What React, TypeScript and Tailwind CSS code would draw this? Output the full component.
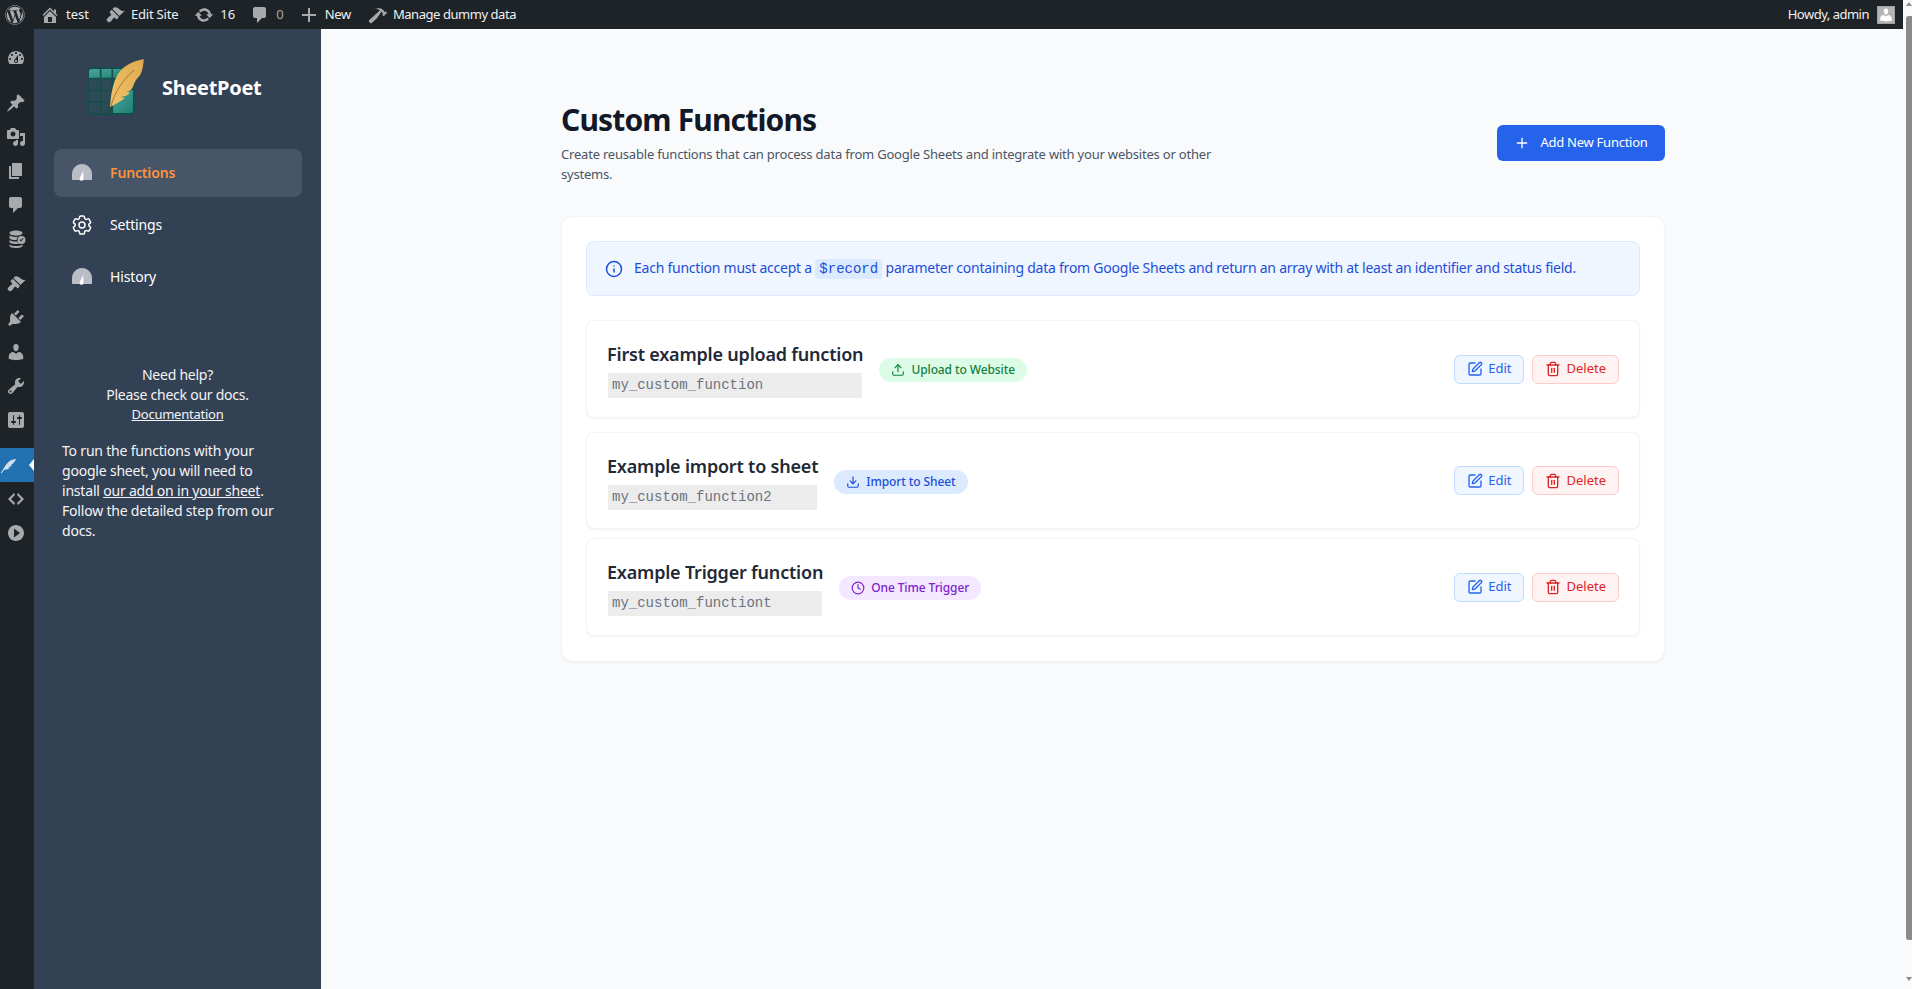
import { Clock, Download, Info, Plus, SquarePen, Trash2, Upload } from "lucide-react";
import { FaWordpress } from "react-icons/fa";
import { HiOutlineCog6Tooth } from "react-icons/hi2";

// dashicons paths, all on a 20x20 box
const dashicons = {
  home: "M16 8.5l1.53 1.53-1.06 1.06L10 4.62l-6.47 6.47-1.06-1.06L10 2.5l4 4v-2h2v4zm-6-2.46l6 5.99V18H4v-5.97zM12 17v-5H8v5h4z",
  brush: "M14.48 11.06L7.41 3.99l1.5-1.5c.5-.56 2.3-.47 3.51.32 1.21.8 1.43 1.28 2.91 2.1 1.18.64 2.45 1.26 4.45.85zm-.71.71L6.7 4.7 4.93 6.47c-.39.39-.39 1.02 0 1.41l1.06 1.06c.39.39.39 1.03 0 1.42-.6.6-1.43 1.11-2.21 1.69-.35.26-.7.53-1.01.84-1.34 1.34-1.37 2.33-.75 2.95l1.1 1.1c.62.62 1.61.59 2.95-.75.31-.31.58-.66.84-1.01.58-.78 1.09-1.61 1.69-2.21.39-.39 1.03-.39 1.42 0l1.06 1.06c.39.39 1.02.39 1.41 0z",
  update: "M10.2 3.28c3.53 0 6.43 2.61 6.92 6h2.08l-3.5 4-3.5-4h2.32c-.45-1.97-2.21-3.45-4.32-3.45-1.45 0-2.73.71-3.54 1.78L4.95 5.66C6.23 4.2 8.11 3.28 10.2 3.28zm-.4 13.44c-3.52 0-6.43-2.61-6.92-6H.8l3.5-4c1.17 1.33 2.33 2.67 3.5 4H5.48c.45 1.97 2.21 3.45 4.32 3.45 1.45 0 2.73-.71 3.54-1.78l1.71 1.95c-1.28 1.46-3.15 2.38-5.25 2.38z",
  comment: "M5 2h9c1.1 0 2 .9 2 2v7c0 1.1-.9 2-2 2h-2l-5 5v-5H5c-1.1 0-2-.9-2-2V4c0-1.1.9-2 2-2z",
  plus: "M17 9v2h-6v6H9v-6H3V9h6V3h2v6h6z",
  hammer: "M17.7 6.32l1.41 1.42-3.47 3.41-1.42-1.42.84-.82c-.32-.76-.81-1.57-1.51-2.31l-4.61 6.59-5.26 4.7c-.39.39-1.02.39-1.42 0l-1.2-1.21c-.39-.39-.39-1.02 0-1.41l10.97-9.92c-1.37-.86-3.21-1.46-5.67-1.48 2.7-.82 4.95-.93 6.58-.3 1.7.66 2.82 2.2 3.91 3.58z",
  dashboard: "M3.76 16h12.48c1.1-1.37 1.76-3.11 1.76-5 0-4.42-3.58-8-8-8s-8 3.58-8 8c0 1.89.66 3.63 1.76 5zM10 4c.55 0 1 .45 1 1s-.45 1-1 1-1-.45-1-1 .45-1 1-1zM6 6c.55 0 1 .45 1 1s-.45 1-1 1-1-.45-1-1 .45-1 1-1zm8 0c.55 0 1 .45 1 1s-.45 1-1 1-1-.45-1-1 .45-1 1-1zm-5.37 5.55L12 7v6c0 1.1-.9 2-2 2s-2-.9-2-2c0-.57.24-1.08.63-1.45zM4 10c.55 0 1 .45 1 1s-.45 1-1 1-1-.45-1-1 .45-1 1-1zm12 0c.55 0 1 .45 1 1s-.45 1-1 1-1-.45-1-1 .45-1 1-1zm-5 3c0-.55-.45-1-1-1s-1 .45-1 1 .45 1 1 1 1-.45 1-1z",
  pin: "M10.44 3.02l1.82-1.82 6.36 6.35-1.83 1.82c-1.05-.68-2.48-.57-3.41.36l-.75.75c-.92.93-1.04 2.35-.35 3.41l-1.83 1.82-2.41-2.41-2.8 2.79c-.42.42-3.38 2.71-3.8 2.29s1.86-3.39 2.28-3.81l2.79-2.79L4.1 9.36l1.83-1.82c1.05.69 2.48.57 3.4-.36l.75-.75c.93-.92 1.05-2.35.36-3.41z",
  media: "M13 11V4c0-.55-.45-1-1-1h-1.67L9 1H5L3.67 3H2c-.55 0-1 .45-1 1v7c0 .55.45 1 1 1h10c.55 0 1-.45 1-1zM7 4.5c1.38 0 2.5 1.12 2.5 2.5S8.38 9.5 7 9.5 4.5 8.38 4.5 7 5.62 4.5 7 4.5zM14 6h5v10.5c0 1.38-1.12 2.5-2.5 2.5S14 17.88 14 16.5s1.12-2.5 2.5-2.5c.17 0 .34.02.5.05V9h-3V6zm-4 8.05V13h2v3.5c0 1.38-1.12 2.5-2.5 2.5S7 17.88 7 16.5 8.12 14 9.5 14c.17 0 .34.02.5.05z",
  page: "M6 15V2h10v13H6zm-1 1h8v2H3V5h2v11z",
  database: "M10 1.5c3.6 0 6.5 1 6.5 2.6S13.6 6.7 10 6.7 3.5 5.700 3.500 4.100 6.400 1.500 10 1.500zM3.500 6.300c1.300 1 3.800 1.600 6.500 1.600.6 0 1.200 0 1.700-.1a5 5 0 0 0-1 3.300H10c-2.700 0-5.200-.6-6.500-1.600zm0 4.700c1.300 1 3.800 1.600 6.500 1.600h1.200c.5.900 1.300 1.600 2.300 2-1 .2-2.300.4-3.500.4-3.600 0-6.500-1-6.500-2.300zm0 4.500c1.300 1 3.800 1.600 6.500 1.600s5.200-.6 6.500-1.600v1.200c0 1.300-2.900 2.300-6.500 2.300s-6.500-1-6.500-2.300zM15.500 7a4 4 0 1 1 0 8 4 4 0 0 1 0-8zm-2 4 1.500 1.500 2.600-2.900-.7-.6-1.900 2.100-.8-.8z",
  plugin: "M13.11 4.36L9.87 7.6 8 5.73l3.24-3.24c.35-.34 1.05-.2 1.56.32.52.51.66 1.21.31 1.55zm-8 1.77l.91-1.12 9.01 9.01-1.19.84c-.71.71-2.63 1.16-3.82 1.16H6.14L4.9 17.26c-.59.59-1.54.59-2.12 0-.59-.58-.59-1.53 0-2.12l1.24-1.24v-3.88c0-1.13.4-3.19 1.09-3.89zm7.26 3.97l3.24-3.24c.34-.35 1.04-.21 1.55.31.52.51.66 1.21.31 1.55l-3.24 3.25z",
  users: "M10 9.25c-2.27 0-2.73-3.44-2.73-3.44C7 4.02 7.82 2 9.97 2c2.16 0 2.98 2.02 2.71 3.81 0 0-.41 3.44-2.68 3.44zm0 2.57L12.72 10c2.39 0 4.52 2.33 4.52 4.53v2.49s-3.65 1.13-7.24 1.13c-3.65 0-7.24-1.13-7.24-1.13v-2.49c0-2.25 1.94-4.48 4.47-4.48z",
  tools: "M16.68 9.77c-1.34 1.34-3.3 1.67-4.95.99l-5.41 6.52c-.99.99-2.59.99-3.58 0s-.99-2.59 0-3.57l6.52-5.42c-.68-1.65-.35-3.61.99-4.95 1.28-1.28 3.12-1.62 4.72-1.06l-2.89 2.89 2.82 2.82 2.86-2.87c.53 1.58.18 3.39-1.08 4.67zM3.81 16.21c.4.39 1.04.39 1.43 0 .4-.4.4-1.04 0-1.43-.39-.4-1.03-.4-1.43 0-.39.39-.39 1.03 0 1.43z",
  settings: "M18 16V4c0-1.1-.9-2-2-2H4c-1.100 0-2 .9-2 2v12c0 1.100.9 2 2 2h12c1.100 0 2-.9 2-2zM8 11h1c.55 0 1 .45 1 1s-.45 1-1 1H8v1.500c0 .28-.22.5-.5.5s-.5-.22-.5-.5V13H6c-.55 0-1-.45-1-1s.45-1 1-1h1V5.500c0-.28.22-.5.5-.5s.5.22.5.5V11zm5-2h-1c-.55 0-1-.45-1-1s.45-1 1-1h1V5.500c0-.28.22-.5.5-.5s.5.22.5.5V7h1c.55 0 1 .45 1 1s-.45 1-1 1h-1v5.500c0 .28-.22.5-.5.5s-.5-.22-.5-.5V9z",
  feather: "M19 2c-5 .6-9 3-11.500 6.500C5.500 11.300 4 14.500 1 18.500l.9.5c1.100-1.500 2.100-2.900 3.200-4.100 2.700.1 5.200-.7 6.900-2.300-1 0-2-.1-2.700-.5 1.500 0 3.500-.5 5-2-1 0-1.800-.2-2.400-.5 2.100-.4 4.700-2.500 7.100-7.600z",
  code: "M9 6l-4 4 4 4-1 2-6-6 6-6zm2 8l4-4-4-4 1-2 6 6-6 6z",
  play: "M10 2c4.400 0 8 3.600 8 8s-3.600 8-8 8-8-3.600-8-8 3.600-8 8-8zM8 5.500v9l6-4.500z",
};

function Dash({ name, className }: { name: keyof typeof dashicons; className?: string }) {
  return (
    <svg viewBox="0 0 20 20" fill="currentColor" className={className ?? "w-5 h-5"}>
      <path d={dashicons[name]} />
    </svg>
  );
}

function Gauge() {
  return (
    <svg viewBox="0 0 24 24" className="w-6 h-6 shrink-0">
      <path d="M2 19v-6C2 7.500 6.500 3 12 3s10 4.500 10 10v6z" fill="#b9bdc6" />
      <path d="M13.200 10 13.500 17.500a2 2 0 1 1-3.500-1z" fill="#fff" />
    </svg>
  );
}

function Logo() {
  return (
    <svg viewBox="0 0 58 60" className="w-[58px] h-[60px] shrink-0">
      <defs>
        <linearGradient id="teal" x1="0" y1="0" x2="1" y2="1">
          <stop offset="0" stopColor="#4aa89e" />
          <stop offset="1" stopColor="#1d7c72" />
        </linearGradient>
        <linearGradient id="gold" x1="1" y1="0" x2="0" y2="1">
          <stop offset="0" stopColor="#e0a94f" />
          <stop offset="1" stopColor="#efc36b" />
        </linearGradient>
      </defs>
      <rect x="1" y="10" width="46" height="46" rx="4" fill="#2f4a57" stroke="#134e4a" strokeWidth="2" />
      <path d="M1 20.500h46V14a4 4 0 0 0-4-4H5a4 4 0 0 0-4 4z" fill="url(#teal)" />
      <path d="M25.500 32.500H47V52a4 4 0 0 1-4 4H25.500z" fill="url(#teal)" />
      <path d="M1 20.500h46M1 32.500h30M1 44h30M13.700 10v46M25.300 10v46" stroke="#134e4a" strokeWidth="1.600" fill="none" />
      <rect x="1" y="10" width="46" height="46" rx="4" fill="none" stroke="#134e4a" strokeWidth="2" />
      <path d="M22 59 24 48" stroke="#134e4a" strokeWidth="1.600" />
      <path d="M57 1C46 3 36 8 31 16c-5 8-7 20-8 33 6-3 11-6 15-9-1.500-.2-3-.5-4-1.200 3 0 6-1 9-4-1.300-.2-2.500-.6-3.200-1.300 3 .2 6-3 7-7 1-3 3-6 6-9 2-3 3.500-8 4-17z" fill="url(#gold)" />
      <path d="M24 48C28 34 34 24 47 12" stroke="#a9782c" strokeWidth="1" fill="none" />
    </svg>
  );
}

const barItems = [
  { icon: "home", label: "test", className: "ml-[15px]", text: "ml-[6px] text-[#f0f0f1]" },
  { icon: "brush", label: "Edit Site", className: "ml-[16px]", text: "ml-[6px] text-[#f0f0f1] tracking-[-0.2px]" },
  { icon: "update", label: "16", className: "ml-[16px]", text: "ml-[6px] text-[#f0f0f1]" },
  { icon: "comment", label: "0", className: "ml-[15px]", text: "ml-[6px] text-[#a7aaad]" },
  { icon: "plus", label: "New", className: "ml-[15px]", text: "ml-[6px] text-[#f0f0f1] tracking-[-0.3px]" },
  { icon: "hammer", label: "Manage dummy data", className: "ml-[17px]", text: "ml-[5px] text-[#f0f0f1] tracking-[-0.45px]" },
] as const;

// top-level WordPress menu, split by the separators
const railGroups: { name: keyof typeof dashicons; active?: boolean }[][] = [
  [{ name: "dashboard" }],
  [{ name: "pin" }, { name: "media" }, { name: "page" }, { name: "comment" }, { name: "database" }],
  [{ name: "brush" }, { name: "plugin" }, { name: "users" }, { name: "tools" }, { name: "settings" }],
  [{ name: "feather", active: true }, { name: "code" }, { name: "play" }],
];

const functions = [
  {
    title: "First example upload function",
    slug: "my_custom_function",
    badge: "Upload to Website",
    Icon: Upload,
    badgeTone: "bg-[#dcfce7] text-[#15803d]",
    row: "h-[98px]",
  },
  {
    title: "Example import to sheet",
    slug: "my_custom_function2",
    badge: "Import to Sheet",
    Icon: Download,
    badgeTone: "bg-[#dbeafe] text-[#1d4ed8]",
    row: "h-[97px] mt-[14px]",
  },
  {
    title: "Example Trigger function",
    slug: "my_custom_functiont",
    badge: "One Time Trigger",
    Icon: Clock,
    badgeTone: "bg-[#f3e8ff] text-[#7e22ce]",
    row: "h-[98px] mt-[9px]",
  },
];

function AdminBar() {
  return (
    <div className="h-[29px] shrink-0 bg-[#1d2327] flex items-center text-[13px] text-[#f0f0f1]">
      <FaWordpress className="w-5 h-5 ml-[5px] text-[#a7aaad]" />
      {barItems.map((item) => (
        <div key={item.label} className={`flex items-center ${item.className}`}>
          <Dash name={item.icon} className="w-5 h-5 text-[#a7aaad]" />
          <span className={item.text}>{item.label}</span>
        </div>
      ))}
      <div className="ml-auto mr-2 flex items-center gap-2">
        <span className="tracking-[-0.5px]">Howdy, admin</span>
        <div className="w-[18px] h-[18px] bg-[#b4b4b4] border border-[#a0a0a0] flex items-end justify-center overflow-hidden">
          <Dash name="users" className="w-4 h-4 text-white" />
        </div>
      </div>
    </div>
  );
}

function Rail() {
  return (
    <div className="w-[34px] shrink-0 bg-[#1d2327] pt-3">
      {railGroups.map((group, idx) => (
        <div key={idx} className={idx === 0 ? "" : "mt-[11px]"}>
          {group.map((item) => (
            <div
              key={item.name}
              className={`h-[34px] flex items-center ${item.active ? "bg-[#2271b1] text-[#cfe0f0]" : "text-[#a7aaad]"}`}
            >
              <Dash name={item.name} className={item.active ? "w-[17px] h-[17px]" : "w-5 h-5 ml-[6px]"} />
              {item.active && (
                <div className="ml-auto w-0 h-0 border-y-[6px] border-y-transparent border-r-[5px] border-r-white" />
              )}
            </div>
          ))}
        </div>
      ))}
    </div>
  );
}

function Sidebar() {
  return (
    <div className="w-[287px] shrink-0 bg-[#334155] text-white">
      {/* Logo */}
      <div className="flex items-center gap-[17px] pl-[53px] pt-[29px]">
        <Logo />
        <span className="text-xl font-bold tracking-[-0.3px]">SheetPoet</span>
      </div>

      {/* Nav */}
      <div className="mt-[31px] ml-5 mr-[19px] flex flex-col gap-1 text-sm tracking-[-0.15px]">
        <div className="h-12 rounded-lg bg-[#475569] flex items-center gap-4 px-4 font-semibold text-[#fb923c]">
          <Gauge />
          Functions
        </div>
        <div className="h-12 rounded-lg flex items-center gap-4 px-4">
          <HiOutlineCog6Tooth className="w-6 h-6" />
          Settings
        </div>
        <div className="h-12 rounded-lg flex items-center gap-4 px-4">
          <Gauge />
          History
        </div>
      </div>

      {/* Help */}
      <div className="mt-[64px] text-center text-sm leading-5 text-gray-100 tracking-[-0.25px]">
        <p>Need help?</p>
        <p>Please check our docs.</p>
        <a className="text-[13px] leading-[18px] underline block">Documentation</a>
      </div>
      <p className="mt-[18px] px-[28px] text-sm leading-5 text-gray-100 whitespace-nowrap tracking-[-0.2px]">
        To run the functions with your
        <br />
        google sheet, you will need to
        <br />
        install <a className="underline">our add on in your sheet</a>.
        <br />
        Follow the detailed step from our
        <br />
        docs.
      </p>
    </div>
  );
}

function Row({ fn }: { fn: (typeof functions)[number] }) {
  const Icon = fn.Icon;
  return (
    <div className={`${fn.row} bg-white border border-[#f3f4f6] rounded-lg shadow-xs px-5 flex items-center justify-between`}>
      <div className="flex items-center gap-[16px]">
        <div>
          <h3 className="text-lg leading-7 font-semibold text-[#1f2937] mb-[5px] tracking-[-0.2px]">{fn.title}</h3>
          <code className="block h-[25px] mx-px bg-[#ececec] px-1 font-['Liberation_Mono',monospace] text-sm leading-[25px] text-[#6b7280]">
            {fn.slug}
          </code>
        </div>
        <span className={`h-6 mt-[2px] px-3 rounded-full flex items-center gap-1.5 text-xs font-medium tracking-[-0.1px] ${fn.badgeTone}`}>
          <Icon size={14} />
          {fn.badge}
        </span>
      </div>
      <div className="flex items-center gap-2 text-[13px]">
        <button className="h-[29px] px-3 flex items-center gap-[5px] rounded-md border border-[#bfdbfe] bg-[#eff6ff] text-[#2563eb]">
          <SquarePen size={16} />
          Edit
        </button>
        <button className="h-[29px] px-3 flex items-center gap-[5px] rounded-md border border-[#fecaca] bg-[#fef2f2] text-[#dc2626]">
          <Trash2 size={16} />
          Delete
        </button>
      </div>
    </div>
  );
}

export default function App() {
  return (
    <div className="h-screen overflow-hidden flex bg-[#f9fafb] font-['Noto_Sans',sans-serif]">
      <div className="flex-1 min-w-0 flex flex-col">
        <AdminBar />
        <div className="flex-1 min-h-0 flex">
          <Rail />
          <Sidebar />

          {/* Main */}
          <main className="flex-1 min-w-0">
            <div className="w-[1104px] ml-[240px] pt-[73px]">
              <div className="flex items-center justify-between">
                <div>
                  <h1 className="text-3xl leading-9 font-bold text-[#111827] tracking-[-0.85px]">Custom Functions</h1>
                  <p className="mt-[6px] max-w-2xl text-[13px] leading-5 text-[#4b5563] tracking-[-0.2px]">
                    Create reusable functions that can process data from Google Sheets and integrate with your websites or other systems.
                  </p>
                </div>
                <button className="h-9 w-[168px] rounded-md bg-[#2563eb] text-white text-[13px] flex items-center justify-center gap-[10px] tracking-[-0.25px]">
                  <Plus size={16} />
                  Add New Function
                </button>
              </div>

              <div className="mt-[32px] bg-white border border-[#f3f4f6] rounded-xl shadow-xs px-6 pt-6 pb-[25px]">
                <div className="h-[55px] rounded-lg border border-[#dbeafe] bg-[#eff6ff] flex items-center gap-[11px] pl-[18px] text-sm text-[#1d4ed8] tracking-[-0.24px]">
                  <Info size={18} />
                  <p>
                    Each function must accept a{" "}
                    <code className="bg-[#dbeafe] rounded px-1 py-[2px] font-['Liberation_Mono',monospace] text-sm tracking-normal">$record</code>{" "}
                    parameter containing data from Google Sheets and return an array with at least an identifier and status field.
                  </p>
                </div>
                <div className="mt-6">
                  {functions.map((fn) => (
                    <Row key={fn.slug} fn={fn} />
                  ))}
                </div>
              </div>
            </div>
          </main>
        </div>
      </div>

      {/* Scrollbar */}
      <div className="w-[9px] shrink-0 bg-[#fafafa] flex flex-col items-end">
        <div className="mt-[2px] w-0 h-0 border-x-[3px] border-x-transparent border-b-[4px] border-b-[#8a8a8a]" />
        <div className="mt-[10px] w-[6px] h-[924px] bg-[#8a8a8a] rounded-tl-[3px] rounded-bl-[3px]" />
        <div className="mt-[37px] w-0 h-0 border-x-[3px] border-x-transparent border-t-[4px] border-t-[#8a8a8a]" />
      </div>
    </div>
  );
}
